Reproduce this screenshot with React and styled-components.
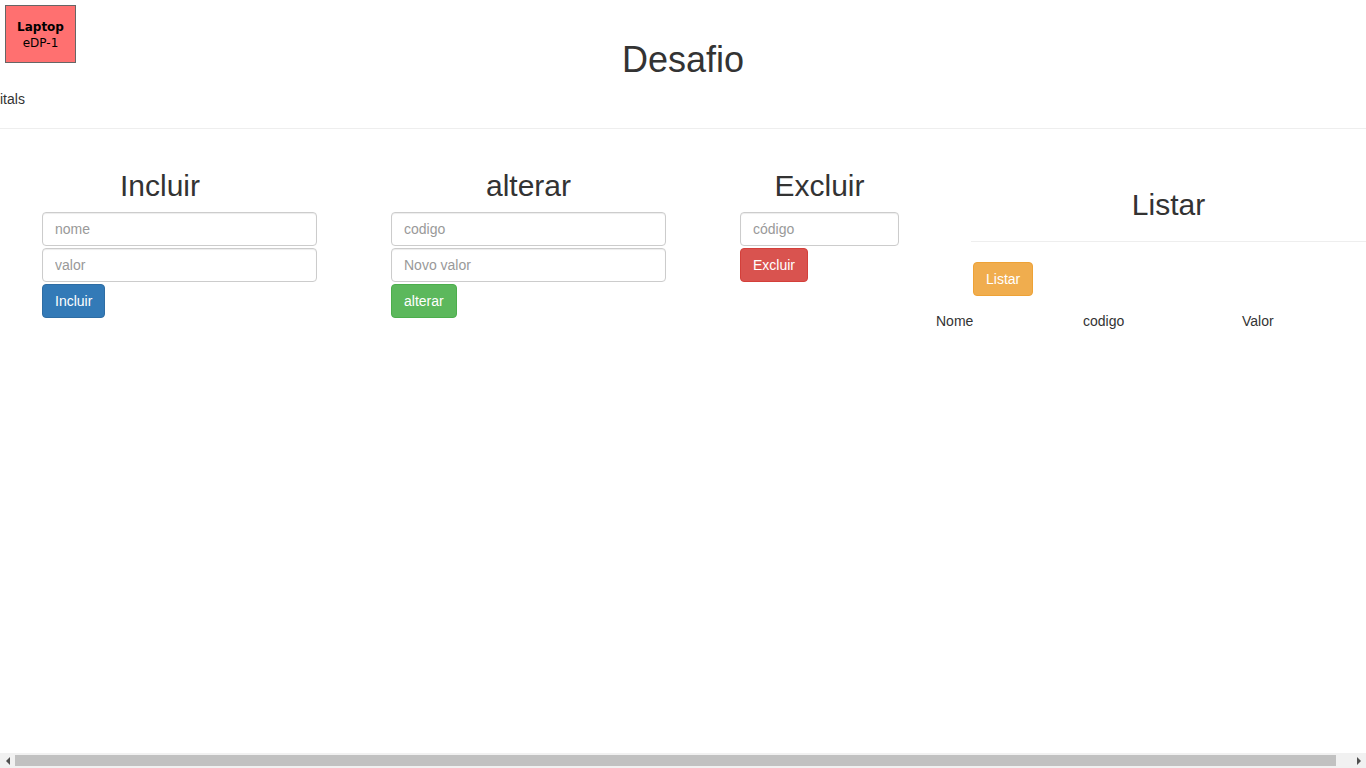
import React from 'react';
import styled, { createGlobalStyle, css } from 'styled-components';

const GlobalStyle = createGlobalStyle`
  html, body {
    margin: 0;
    padding: 0;
  }
  body {
    font-family: "Liberation Sans", Arial, sans-serif;
    font-size: 14px;
    line-height: 1.42857;
    color: #333;
    background: #fff;
  }
  * {
    box-sizing: border-box;
  }
`;

const Page = styled.div`
  min-width: 1381px;
`;

const Header = styled.header`
  width: 1366px;
  padding-top: 20px;
`;

const Title = styled.h1`
  margin: 20px 0 10px;
  font-size: 36px;
  font-weight: 500;
  line-height: 1.1;
  text-align: center;
`;

const NavText = styled.div`
  height: 20px;
`;

const Divider = styled.hr`
  margin: 18px 0 20px;
  border: 0;
  border-top: 1px solid #eee;
  height: 0;
`;

const Row = styled.div`
  display: flex;
  align-items: flex-start;
  padding-left: 42px;
`;

const Column = styled.section`
  display: flex;
  flex-direction: column;
  align-items: flex-start;
  gap: 2px;
  width: ${(p) => p.$width}px;
  margin-right: ${(p) => p.$gap}px;
`;

const SectionTitle = styled.h2`
  align-self: stretch;
  margin: 20px 0 8px;
  font-size: 30px;
  font-weight: 500;
  line-height: 1.1;
  text-align: center;
  ${(p) =>
    p.$shift &&
    css`
      margin-left: ${p.$shift}px;
    `}
`;

const Input = styled.input`
  display: block;
  width: 100%;
  height: 34px;
  padding: 6px 12px;
  font: inherit;
  font-size: 14px;
  color: #555;
  background: #fff;
  border: 1px solid #ccc;
  border-radius: 4px;
  box-shadow: inset 0 1px 1px rgba(0, 0, 0, 0.075);
  outline: none;
  &::placeholder {
    color: #999;
    opacity: 1;
  }
`;

const variants = {
  primary: { bg: '#337ab7', border: '#2e6da4' },
  success: { bg: '#5cb85c', border: '#4cae4c' },
  danger: { bg: '#d9534f', border: '#d43f3a' },
  warning: { bg: '#f0ad4e', border: '#eea236' },
};

const Button = styled.button`
  display: inline-block;
  height: 34px;
  padding: 6px 12px;
  font: inherit;
  font-size: 14px;
  line-height: 20px;
  color: #fff;
  background: ${(p) => variants[p.$variant].bg};
  border: 1px solid ${(p) => variants[p.$variant].border};
  border-radius: 4px;
  cursor: pointer;
  white-space: nowrap;
`;

const ListSection = styled.section`
  width: 395px;
  display: flex;
  flex-direction: column;
  align-items: flex-start;
`;

const PageHeader = styled.div`
  align-self: stretch;
  margin: 39px 0 20px;
  padding-bottom: 9px;
  border-bottom: 1px solid #eee;
  h2 {
    margin: 0 0 11px;
    font-size: 30px;
    font-weight: 500;
    line-height: 1.1;
    text-align: center;
  }
`;

const ListButton = styled(Button)`
  margin-left: 2px;
`;

const Table = styled.div`
  display: grid;
  grid-template-columns: 147px 159px auto;
  margin: 8px 0 0 -35px;
  padding: 8px 0;
  font-weight: 400;
`;

const Overlay = styled.div`
  position: fixed;
  top: 5px;
  left: 5px;
  width: 71px;
  height: 58px;
  display: flex;
  flex-direction: column;
  align-items: center;
  justify-content: center;
  padding-top: 2px;
  background: #ff7070;
  border: 1px solid #666;
  font-family: "DejaVu Sans", sans-serif;
  font-size: 12px;
  line-height: 16px;
  color: #000;
  z-index: 10;
  b {
    font-weight: 700;
  }
`;

// the browser's own horizontal scrollbar, drawn since the shot hides it
const Scrollbar = styled.div`
  position: fixed;
  left: 0;
  right: 0;
  bottom: 0;
  height: 15px;
  display: flex;
  align-items: center;
  background: #f1f1f1;
  z-index: 20;
`;

const Arrow = styled.span`
  width: 15px;
  height: 15px;
  display: flex;
  align-items: center;
  justify-content: center;
  &::before {
    content: '';
    width: 0;
    height: 0;
    border-top: 4px solid transparent;
    border-bottom: 4px solid transparent;
    ${(p) =>
      p.$dir === 'left'
        ? css`
            border-right: 4px solid #505050;
          `
        : css`
            border-left: 4px solid #505050;
          `}
  }
`;

const Track = styled.div`
  flex: 1;
  height: 11px;
  display: flex;
`;

const Thumb = styled.div`
  width: 1321px;
  height: 100%;
  background: #c1c1c1;
`;

export default function App() {
  return (
    <Page>
      <GlobalStyle />
      <Overlay>
        <b>Laptop</b>
        <span>eDP-1</span>
      </Overlay>
      <Header>
        <Title>Desafio</Title>
        <NavText>itals</NavText>
      </Header>
      <Divider />
      <Row>
        <Column $width={275} $gap={74}>
          <SectionTitle $shift={-39}>Incluir</SectionTitle>
          <Input placeholder="nome" />
          <Input placeholder="valor" />
          <Button $variant="primary">Incluir</Button>
        </Column>
        <Column $width={275} $gap={74}>
          <SectionTitle>alterar</SectionTitle>
          <Input placeholder="codigo" />
          <Input placeholder="Novo valor" />
          <Button $variant="success">alterar</Button>
        </Column>
        <Column $width={159} $gap={72}>
          <SectionTitle>Excluir</SectionTitle>
          <Input placeholder="código" />
          <Button $variant="danger">Excluir</Button>
        </Column>
        <ListSection>
          <PageHeader>
            <h2>Listar</h2>
          </PageHeader>
          <ListButton $variant="warning">Listar</ListButton>
          <Table>
            <span>Nome</span>
            <span>codigo</span>
            <span>Valor</span>
          </Table>
        </ListSection>
      </Row>
      <Scrollbar>
        <Arrow $dir="left" />
        <Track>
          <Thumb />
        </Track>
        <Arrow $dir="right" />
      </Scrollbar>
    </Page>
  );
}
